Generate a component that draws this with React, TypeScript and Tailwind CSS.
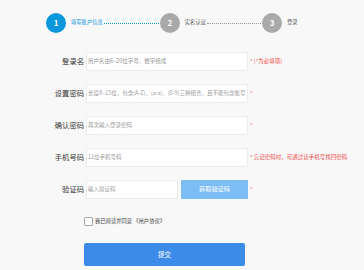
import React from "react";

interface Row {
  label: string;
  placeholder: string;
  note?: string;
}

const rows: Row[] = [
  { label: "登录名", placeholder: "用户名由6~20位字母、数字组成", note: "(*为必填项)" },
  { label: "设置密码", placeholder: "长度8~15位，包含(A-Z)、(a-z)、(0-9)三种组合，且不能包含账号" },
  { label: "确认密码", placeholder: "再次输入登录密码" },
  { label: "手机号码", placeholder: "11位手机号码", note: "忘记密码时，可通过该手机号找回密码" },
];

function Step({ n, text, active }: { n: number; text: string; active?: boolean }) {
  return (
    <div className="flex items-center">
      <div
        className={`w-[20px] h-[20px] rounded-full flex items-center justify-center text-white text-[8px] font-bold ${
          active ? "bg-[#0a97dc]" : "bg-[#a9a9a9]"
        }`}
      >
        {n}
      </div>
      <span className={`ml-[5px] text-[5.3px] leading-none ${active ? "text-[#0a97dc]" : "text-[#555]"}`}>{text}</span>
    </div>
  );
}

export default function App() {
  return (
    <div className="w-[364px] h-[270px] bg-[#f8f8f8] overflow-hidden font-['Noto_Sans_CJK_SC',sans-serif]">
      {/* Steps */}
      <div className="flex items-center pl-[46px] pt-[13px]">
        <Step n={1} text="填写账户信息" active />
        <div className="w-[55px] border-t border-dotted border-[#0a97dc] mx-[1px]" />
        <Step n={2} text="实名认证" />
        <div className="w-[54px] border-t border-dotted border-[#999] mx-[1px]" />
        <Step n={3} text="登录" />
      </div>

      {/* Form */}
      <div className="flex flex-col gap-[13px] mt-[19px]">
        {rows.map((r) => (
          <div key={r.label} className="flex items-center h-[19px]">
            <span className="w-[84px] text-right text-[7.3px] text-[#333] leading-none">{r.label}</span>
            <div className="ml-[2px] w-[162px] h-[19px] bg-white border border-[#ececec] flex items-center pl-[1px] overflow-hidden whitespace-nowrap">
              <span className="text-[5.5px] text-[#999] leading-none">{r.placeholder}</span>
            </div>
            <span className="ml-[2px] text-[5.5px] text-[#f24a4a] leading-none whitespace-nowrap">
              *{r.note ? ` ${r.note}` : ""}
            </span>
          </div>
        ))}
        <div className="flex items-center h-[19px]">
          <span className="w-[84px] text-right text-[7.3px] text-[#333] leading-none">验证码</span>
          <div className="ml-[2px] w-[92px] h-[19px] bg-white border border-[#ececec] flex items-center pl-[1px]">
            <span className="text-[5.5px] text-[#999] leading-none">输入验证码</span>
          </div>
          <div className="ml-[3px] w-[67px] h-[19px] bg-[#7dbdf5] rounded-[1px] flex items-center justify-center">
            <span className="text-[6.2px] text-white leading-none">获取验证码</span>
          </div>
          <span className="ml-[2px] text-[5.5px] text-[#f24a4a] leading-none">*</span>
        </div>
      </div>

      {/* Agreement */}
      <div className="flex items-center pl-[84px] mt-[18px]">
        <div className="w-[9px] h-[9px] bg-white border border-[#aaa] rounded-[1px]" />
        <span className="ml-[2px] text-[5.3px] text-[#444] leading-none">我已阅读并同意 《用户协议》</span>
      </div>

      {/* Submit */}
      <div className="pl-[84px] mt-[17px]">
        <div className="w-[161px] h-[23px] bg-[#3d8be8] rounded-[2px] flex items-center justify-center">
          <span className="text-[6.5px] text-white leading-none">提交</span>
        </div>
      </div>
    </div>
  );
}
